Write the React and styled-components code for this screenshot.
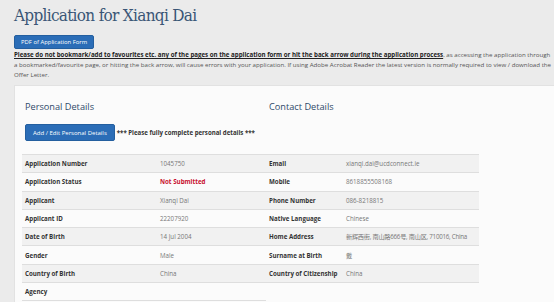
import styled, { createGlobalStyle } from "styled-components";

const Global = createGlobalStyle`
  html, body {
    margin: 0;
    padding: 0;
    background: #ebebeb;
    overflow: hidden;
  }
  body {
    font-family: "Open Sans", "Noto Sans", sans-serif;
    color: #333;
  }
`;

const Page = styled.div`
  width: 600px;
  padding: 0 0 0 14px;
`;

const Title = styled.h1`
  margin: 0;
  padding-top: 3px;
  font-family: "DejaVu Serif Condensed", "DejaVu Serif", serif;
  font-weight: 300;
  font-size: 17px;
  letter-spacing: -0.7px;
  line-height: 24px;
  color: #3a5676;
`;

const BlueButton = styled.button`
  display: inline-block;
  background: #2b6db7;
  color: #fff;
  border: 1px solid #245f9f;
  border-radius: 2px;
  font-family: "Open Sans", sans-serif;
  font-size: ${p => p.$small ? "6px" : "5.9px"};
  padding: 0 ${p => p.$small ? "7px" : "6px"};
  height: ${p => p.$small ? "17px" : "14px"};
  cursor: pointer;
`;

const Warning = styled.p`
  margin: 1px 0 0;
  width: 539px;
  font-size: 6.15px;
  line-height: 10px;
  color: #555;

  strong {
    color: #222;
    text-decoration: underline;
  }
`;

const Card = styled.div`
  margin-top: 5px;
  background: #fbfbfb;
  border-top: 1px solid #e2e2e2;
  border-left: 1px solid #e2e2e2;
  padding: 14px 0 0 7px;
  display: flex;
  height: 230px;
`;

const Column = styled.div`
  width: ${p => p.$w}px;
  display: flex;
  flex-direction: column;
`;

const Heading = styled.h2`
  margin: 0 0 0 3px;
  font-weight: 400;
  font-size: 9.2px;
  line-height: 14px;
  color: #2f4a6a;
`;

const ActionRow = styled.div`
  height: 17px;
  margin: 10px 0 13px 3px;
  display: flex;
  align-items: center;
  gap: 2px;
  font-size: 6.1px;
  font-weight: 700;
`;

const Table = styled.table`
  width: 100%;
  border-collapse: collapse;
  border-top: 1px solid #dedede;

  tr:nth-child(odd) td {
    background: #f1f1f1;
  }

  td {
    height: 17.3px;
    padding: 0 0 0 3px;
    border-bottom: 1px solid #dedede;
    font-size: 6.2px;
    vertical-align: middle;
    white-space: nowrap;
  }
`;

const Label = styled.td`
  width: ${p => p.$w}px;
  font-weight: 700;
  color: #333;
`;

const Value = styled.td`
  color: ${p => p.$alert ? "#c8102e" : "#777"};
  font-weight: ${p => p.$alert ? 700 : 400};
  font-family: "Open Sans", "Noto Sans CJK SC", sans-serif;
  letter-spacing: ${p => p.$tight ? "-0.25px" : "0"};
`;

const personal = [
  ["Application Number", "1045750"],
  ["Application Status", "Not Submitted", true],
  ["Applicant", "Xianqi Dai"],
  ["Applicant ID", "22207920"],
  ["Date of Birth", "14 Jul 2004"],
  ["Gender", "Male"],
  ["Country of Birth", "China"],
  ["Agency", ""],
];

const contact = [
  ["Email", "xianqi.dai@ucdconnect.ie"],
  ["Mobile", "8618855508168"],
  ["Phone Number", "086-8218815"],
  ["Native Language", "Chinese"],
  ["Home Address", "新辉西街, 南山路666号, 南山区, 710016, China"],
  ["Surname at Birth", "戴"],
  ["Country of Citizenship", "China"],
];

function DetailsTable({ rows, labelWidth }) {
  return (
    <Table>
      <tbody>
        {rows.map(([label, value, alert]) => (
          <tr key={label}>
            <Label $w={labelWidth}>{label}</Label>
            <Value $alert={alert} $tight={/[\u4e00-\u9fff]/.test(value)}>{value}</Value>
          </tr>
        ))}
      </tbody>
    </Table>
  );
}

export default function App() {
  return (
    <>
      <Global />
      <Page>
        <Title>Application for Xianqi Dai</Title>
        <BlueButton style={{ marginTop: 6 }}>PDF of Application Form</BlueButton>
        <Warning>
          <strong>Please do not bookmark/add to favourites etc. any of the pages on the application form or hit the back arrow during the application process</strong>
          , as accessing the application through a bookmarked/favourite page, or hitting the back arrow, will cause errors with your application. If using Adobe Acrobat Reader the latest version is normally required to view / download the Offer Letter.
        </Warning>
        <Card>
          <Column $w={244}>
            <Heading>Personal Details</Heading>
            <ActionRow>
              <BlueButton $small>Add / Edit Personal Details</BlueButton>
              <span>*** Please fully complete personal details ***</span>
            </ActionRow>
            <DetailsTable rows={personal} labelWidth={132} />
          </Column>
          <Column $w={213}>
            <Heading>Contact Details</Heading>
            <ActionRow />
            <DetailsTable rows={contact} labelWidth={74} />
          </Column>
        </Card>
      </Page>
    </>
  );
}
